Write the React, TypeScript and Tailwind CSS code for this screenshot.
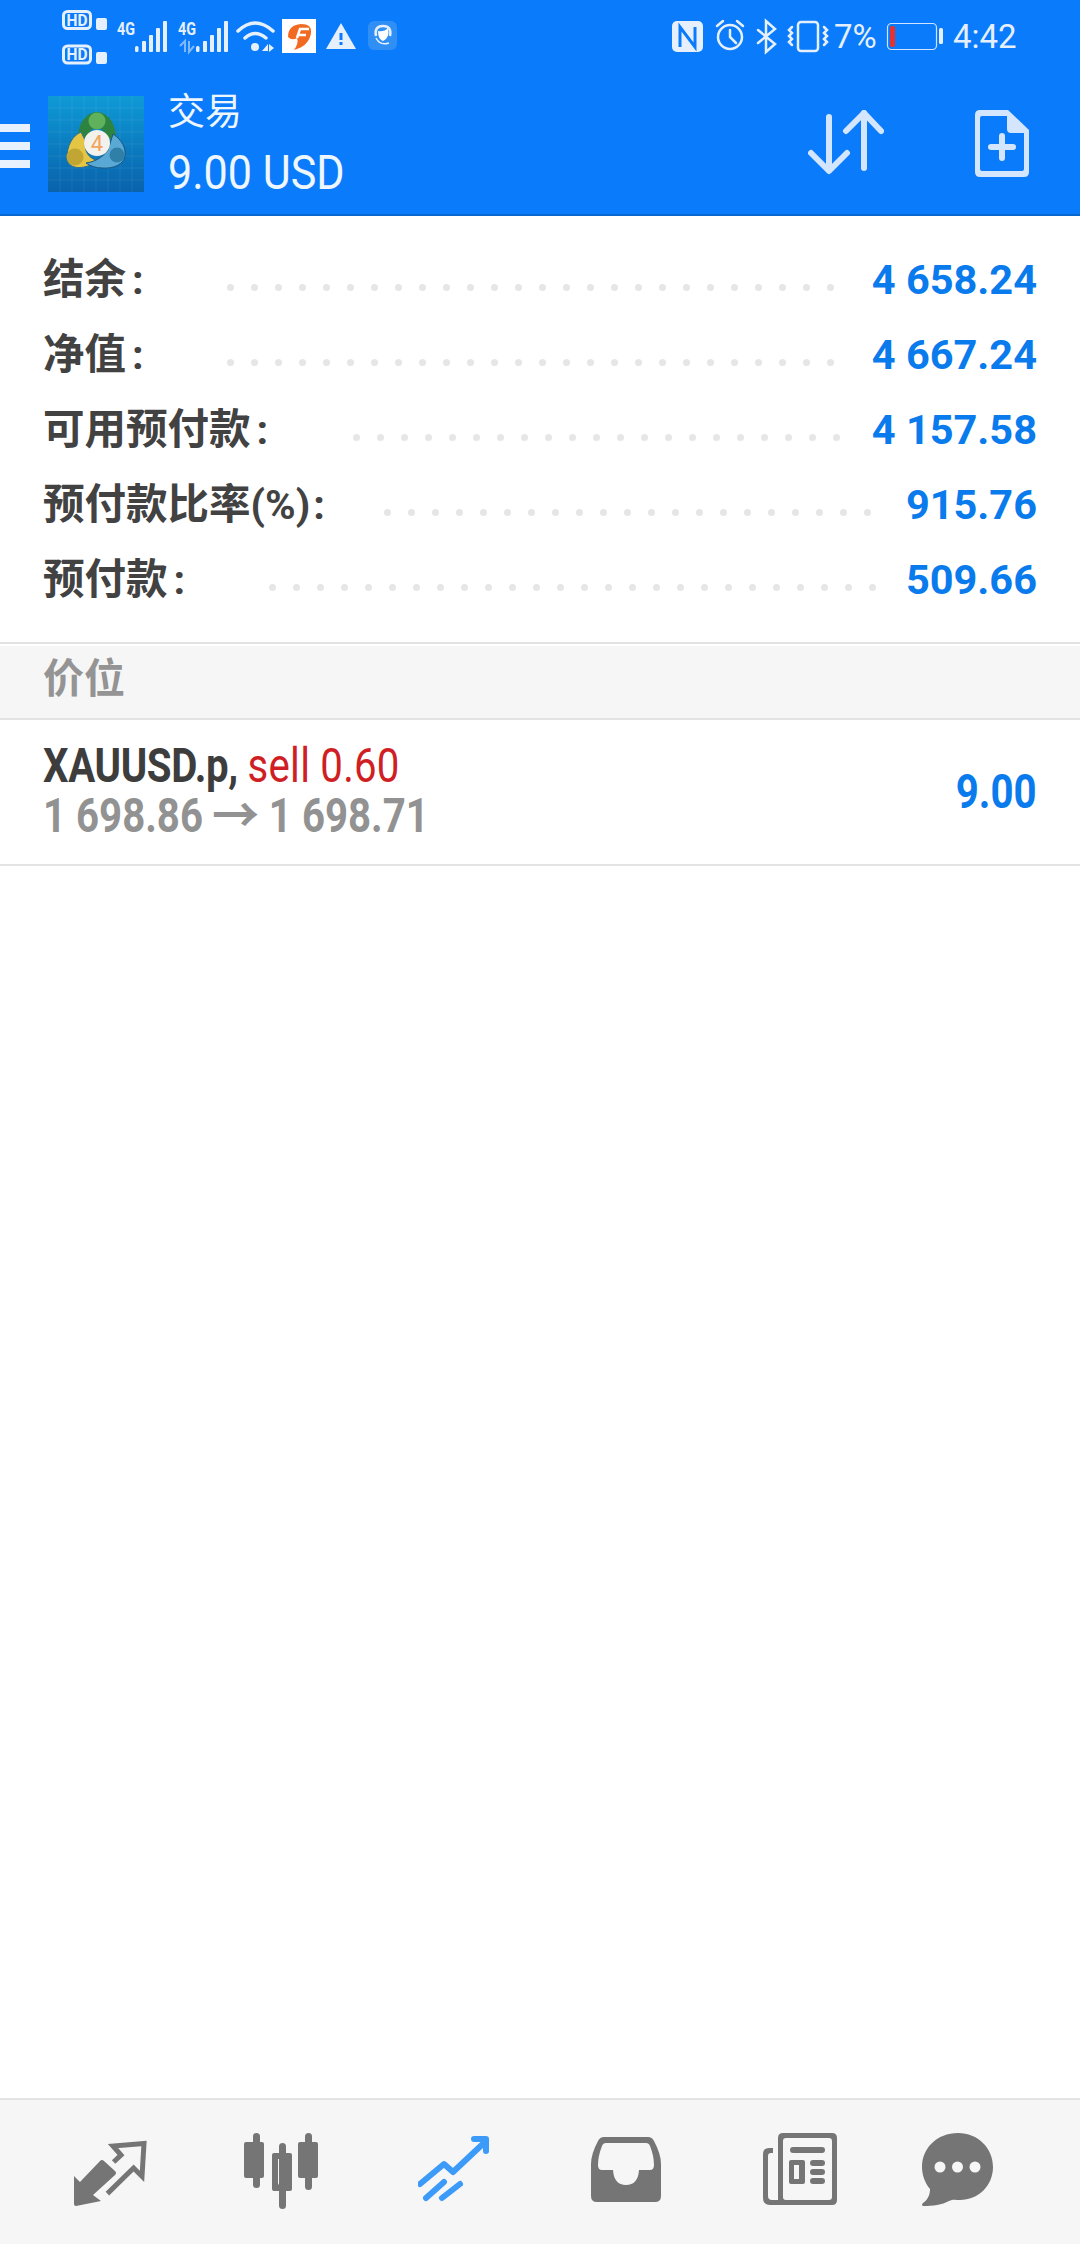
import React from "react";

const cjk = "font-['Roboto','Noto_Sans_CJK_SC',sans-serif]";
const ink = "#e6f0fd";

function Dots({ n }: { n: number }) {
  return (
    <div className="flex gap-[17px]">
      {Array.from({ length: n }).map((_, i) => (
        <span key={i} className="w-[7px] h-[7px] rounded-full bg-[#e6e6e6]" />
      ))}
    </div>
  );
}

function Row({ label, colon, value, dotsAt, n }: { label: string; colon: string; value: string; dotsAt: string; n: number }) {
  return (
    <div className="relative h-[75px] flex items-center justify-between pl-[43px] pr-[43px]">
      <span className="text-[41.5px] font-bold text-[#424242] leading-none">
        {label}
        <span className={colon}>:</span>
      </span>
      <span className="text-[41.5px] font-bold text-[#0a7bec] leading-none">{value}</span>
      <div className={`absolute top-[42px] ${dotsAt}`}>
        <Dots n={n} />
      </div>
    </div>
  );
}

function StatusLeft() {
  return (
    <svg width="400" height="70" viewBox="0 0 400 70" className="block">
      <g fill="none" stroke={ink} strokeWidth="3">
        <rect x="63.5" y="11.5" width="27" height="17" rx="4" />
        <rect x="63.5" y="46" width="27" height="17" rx="4" />
      </g>
      <g fill={ink} fontFamily="Roboto" fontWeight="700">
        <text x="66.5" y="25.5" fontSize="16" textLength="21" lengthAdjust="spacingAndGlyphs">HD</text>
        <text x="66.5" y="60" fontSize="16" textLength="21" lengthAdjust="spacingAndGlyphs">HD</text>
        <text x="117" y="35" fontSize="19" textLength="18" lengthAdjust="spacingAndGlyphs">4G</text>
        <text x="178" y="35" fontSize="19" textLength="18" lengthAdjust="spacingAndGlyphs">4G</text>
        <rect x="96" y="18" width="11" height="12" rx="2" />
        <rect x="96" y="52" width="11" height="12" rx="2" />
        <rect x="135" y="46" width="3.5" height="6" rx="1.5" />
        <rect x="142" y="41" width="4" height="11" rx="1" />
        <rect x="149" y="35" width="4" height="17" rx="1" />
        <rect x="156" y="28" width="4" height="24" rx="1" />
        <rect x="163" y="21" width="4" height="31" rx="1" />
        <rect x="196" y="46" width="3.5" height="6" rx="1.5" />
        <rect x="203" y="41" width="4" height="11" rx="1" />
        <rect x="210" y="35" width="4" height="17" rx="1" />
        <rect x="217" y="28" width="4" height="24" rx="1" />
        <rect x="224" y="21" width="4" height="31" rx="1" />
        <circle cx="255" cy="47" r="4" />
        <path d="M262 51 L268 44 V51Z M269 44 L274 48 L269 52Z" />
        <path d="M326 49 L341 23 L356 49Z" />
      </g>
      <path d="M180 46 L185 41 V52 M189 41 V52 L194 46" fill="none" stroke="#7fb8fb" strokeWidth="2" />
      <g fill="none" stroke={ink} strokeWidth="3.5" strokeLinecap="round">
        <path d="M238 31 Q255 15 273 31" />
        <path d="M245 38 Q255 29 266 38" />
      </g>
      <rect x="282" y="19" width="34" height="34" fill="#ffffff" />
      <path d="M288 37 Q288 25 301 24 Q312 24 311 33 Q309 46 294 50 Q299 43 297 38 Q292 41 288 37Z" fill="#f26a21" />
      <path d="M297 38 L300 29 H309 M298 35 H306" fill="none" stroke="#ffffff" strokeWidth="2.5" />
      <rect x="339.5" y="33" width="3" height="7" fill="#0a7bfa" />
      <rect x="339.5" y="42" width="3" height="3" fill="#0a7bfa" />
      <rect x="368" y="21" width="29" height="29" rx="6" fill="#2f8ff5" />
      <path d="M376 36 Q374 26 383 26 Q392 26 390 36" fill="none" stroke={ink} strokeWidth="2.5" />
      <path d="M378 31 Q384 32 388 28 Q390 38 383 41 Q378 39 378 31Z" fill="#ffffff" />
      <path d="M376 38 Q380 46 389 43" fill="none" stroke={ink} strokeWidth="1.5" />
    </svg>
  );
}

function StatusRight() {
  return (
    <svg width="310" height="70" viewBox="0 0 310 70" className="block">
      <rect x="32" y="21" width="31" height="31" rx="5" fill={ink} />
      <path d="M40 47 V27 L55 47 V27" fill="none" stroke="#0a7bfa" strokeWidth="3" />
      <g fill="none" stroke={ink} strokeWidth="2.5" strokeLinecap="round">
        <circle cx="90" cy="37" r="12" />
        <path d="M90 30 V37 L96 43" />
        <path d="M77 26 L83 21" />
        <path d="M103 26 L97 21" />
        <path d="M118 30 L135 44 L126 52 V21 L135 29 L118 43" />
        <rect x="158" y="22" width="20" height="29" rx="3" />
        <path d="M152 27 l-3 3 l3 3 l-3 3 l3 3 l-3 3 l3 3" />
        <path d="M184 27 l3 3 l-3 3 l3 3 l-3 3 l3 3 l-3 3" />
      </g>
      <rect x="247.5" y="23.5" width="49" height="26" rx="4" fill="none" stroke="#cfe4fe" strokeWidth="1.2" />
      <rect x="250" y="26" width="5" height="21" rx="2" fill="#e6322e" />
      <rect x="299" y="28" width="4" height="16" rx="1.5" fill={ink} />
    </svg>
  );
}

function Logo() {
  const lines = [12, 24, 36, 48, 60, 72, 84];
  return (
    <svg width="96" height="96" viewBox="0 0 96 96" className="block">
      {lines.map((p) => (
        <g key={p} stroke="#ffffff" strokeOpacity="0.07" strokeWidth="1">
          <path d={`M${p} 0 V96`} />
          <path d={`M0 ${p} H96`} />
        </g>
      ))}
      <path d="M49 16 C37 17 30 28 30 43 L40 43 C40 36 44 32 49 32 C54 32 58 36 58 43 L68 43 C68 28 61 17 49 16Z" fill="#2d8440" />
      <circle cx="49" cy="25" r="8.5" fill="#5fb15b" />
      <path d="M33 36 C24 40 19 50 19 62 C19 70 28 73 36 71 C42 70 46 67 48 64 C40 62 36 54 37 44 Z" fill="#e4c544" stroke="#2f6f8f" strokeWidth="1" />
      <circle cx="27" cy="61" r="8.5" fill="#c2a634" />
      <path d="M65 38 C74 44 78 52 77 60 C76 68 66 73 54 72 C48 72 42 70 38 67 C46 66 54 62 60 54 Z" fill="#5aa9d4" stroke="#17557f" strokeWidth="1" />
      <circle cx="69" cy="59" r="7.5" fill="#2f7fa8" />
      <circle cx="49" cy="47" r="13" fill="#f3f1ec" />
      <text x="49" y="55" textAnchor="middle" fontSize="22" fontWeight="400" fill="#f0a45c" fontFamily="Roboto">4</text>
    </svg>
  );
}

const navGray = "#757575";

function IconArrows() {
  return (
    <svg width="80" height="72" viewBox="0 0 80 72" className="block">
      <path d="M1 38 L7 44 L27 23 Q29 21 31 23 L42 33 Q44 35 42 37 L20 57 L28 63 L3 68 Q1 68 1 66Z" fill={navGray} />
      <path d="M40.6 24 L48 17 L40 8 L71 5.4 L69 38.4 L60.6 30 L34.4 55.6" fill="none" stroke={navGray} strokeWidth="5" />
    </svg>
  );
}

function IconCandles() {
  return (
    <svg width="76" height="76" viewBox="0 0 76 76" className="block">
      <g fill={navGray}>
        <rect x="10" y="0" width="7" height="55" rx="3.5" />
        <rect x="1" y="9" width="20" height="36" rx="2" />
        <rect x="36" y="10" width="7" height="66" rx="3.5" />
        <path fillRule="evenodd" d="M31 20 H47 Q49 20 49 22 V56 Q49 58 47 58 H31 Q29 58 29 56 V22 Q29 20 31 20Z M35 26 V50 Q35 52 37 52 H41 Q43 52 43 50 V28 Q43 26 41 26Z" />
        <rect x="62" y="0" width="7" height="57" rx="3.5" />
        <rect x="55" y="9" width="20" height="36" rx="2" />
      </g>
    </svg>
  );
}

function IconTrend() {
  return (
    <svg width="72" height="68" viewBox="0 0 72 68" className="block">
      <g fill="none" stroke="#3c9bf8" strokeWidth="6" strokeLinecap="round" strokeLinejoin="round">
        <path d="M2 50 L26 30 L35 38 L68 7" />
        <path d="M56 5 H68 V17" />
        <path d="M8 64 L26 48" />
        <path d="M24 64 L42 50" />
      </g>
    </svg>
  );
}

function IconInbox() {
  return (
    <svg width="72" height="68" viewBox="0 0 72 68" className="block">
      <path fillRule="evenodd" fill={navGray} d="M14 1 H58 Q62 1 64 5 Q71 18 71 28 V60 Q71 66 65 66 H7 Q1 66 1 60 V28 Q1 18 8 5 Q10 1 14 1Z M16 7 Q13 7 12 10 Q8 20 8 29 Q8 34 12 34 H23 Q24 49 36 49 Q48 49 49 34 H60 Q64 34 64 29 Q64 20 60 10 Q59 7 56 7Z" />
    </svg>
  );
}

function IconNews() {
  return (
    <svg width="76" height="74" viewBox="0 0 76 74" className="block">
      <path fillRule="evenodd" fill={navGray} d="M21 0 H70 Q75 0 75 5 V67 Q75 72 70 72 H8 Q1 72 1 65 V21 Q1 15 7 15 H11 V20 H9 Q6 20 6 23 V63 Q6 67 10 67 H16 V5 Q16 0 21 0Z M24 5 Q21 5 21 8 V64 Q21 67 24 67 H67 Q70 67 70 64 V8 Q70 5 67 5Z" />
      <g fill={navGray}>
        <rect x="28" y="14" width="35" height="6" rx="3" />
        <path fillRule="evenodd" d="M29 27 H41 Q43 27 43 29 V49 Q43 51 41 51 H29 Q27 51 27 49 V29 Q27 27 29 27Z M32 32 V46 H37 V32Z" />
        <rect x="48" y="27" width="15" height="6" rx="3" />
        <rect x="48" y="36" width="15" height="6" rx="3" />
        <rect x="48" y="45" width="15" height="6" rx="3" />
      </g>
    </svg>
  );
}

function IconChat() {
  return (
    <svg width="74" height="74" viewBox="0 0 74 74" className="block">
      <path fill={navGray} d="M37 0 C57 0 72 15 72 34 C72 53 57 67 39 67 C35 67 32 66 28 68 C21 72 12 73 2 73 Q0 72 2 70 C8 66 9 60 9 56 C4 50 1 42 1 34 C1 15 16 0 37 0Z" />
      <circle cx="19" cy="34" r="5.5" fill="#f6f6f6" />
      <circle cx="36.5" cy="34" r="5.5" fill="#f6f6f6" />
      <circle cx="54" cy="34" r="5.5" fill="#f6f6f6" />
    </svg>
  );
}

export default function App() {
  return (
    <div className={`w-[1080px] h-[2244px] bg-white flex flex-col ${cjk}`}>
      <header className="relative h-[216px] bg-[#0a7bfa] border-b-[2px] border-[#0868cf] text-white">
        <div className="absolute left-0 top-0">
          <StatusLeft />
        </div>
        <div className="absolute left-[640px] top-0">
          <StatusRight />
        </div>
        <div className="absolute left-[953px] top-[24px] text-[33px] leading-[26px] text-[#e6f0fd] font-normal">4:42</div>
        <div className="absolute left-[834px] top-[19px] text-[33px] leading-[36px] text-[#e6f0fd]">7%</div>

        <div className="absolute left-0 top-[124px] flex flex-col gap-[10px]">
          <span className="block w-[30px] h-[8px] bg-[#e8f2fe]" />
          <span className="block w-[30px] h-[8px] bg-[#e8f2fe]" />
          <span className="block w-[30px] h-[8px] bg-[#e8f2fe]" />
        </div>

        <div className="absolute left-[48px] top-[96px] w-[96px] h-[96px] bg-gradient-to-b from-[#0f9ad6] to-[#0a62ac]">
          <Logo />
        </div>

        <div className="absolute left-[168px] top-[93px] text-[37px] leading-[40px] text-[#eef6ff]">交易</div>
        <div className="absolute left-[168px] top-[147px] text-[49px] leading-[52px] text-[#eef6ff] whitespace-nowrap scale-x-[0.88] origin-left">9.00 USD</div>

        <svg width="76" height="66" viewBox="0 0 76 66" className="absolute left-[808px] top-[110px]">
          <g fill="none" stroke="#d4e6fd" strokeWidth="6" strokeLinecap="round" strokeLinejoin="round">
            <path d="M21 7 V60" />
            <path d="M3 43 L21 61 L39 43" />
            <path d="M56 58 V3" />
            <path d="M38 21 L56 3 L73 21" />
          </g>
        </svg>
        <svg width="56" height="68" viewBox="0 0 56 68" className="absolute left-[974px] top-[110px]">
          <path fillRule="evenodd" fill="#d4e6fd" d="M6 0 H34 L55 20 V62 Q55 67 50 67 H6 Q1 67 1 62 V5 Q1 0 6 0Z M8 6 Q6 6 6 8 V59 Q6 61 8 61 H48 Q50 61 50 59 V23 H37 Q33 23 33 19 V6Z" />
          <rect x="14" y="34" width="28" height="6" rx="3" fill="#d4e6fd" />
          <rect x="25" y="23" width="6" height="28" rx="3" fill="#d4e6fd" />
        </svg>
      </header>

      <section className="pt-[26px] pb-[4px] h-[426px] bg-white">
        <Row label="结余" colon="ml-[6px]" value="4 658.24" dotsAt="left-[226.5px]" n={26} />
        <Row label="净值" colon="ml-[6px]" value="4 667.24" dotsAt="left-[226.5px]" n={26} />
        <Row label="可用预付款" colon="ml-[6px]" value="4 157.58" dotsAt="left-[352.5px]" n={21} />
        <Row label="预付款比率(%)" colon="ml-[3px]" value="915.76" dotsAt="left-[383.5px]" n={21} />
        <Row label="预付款" colon="ml-[6px]" value="509.66" dotsAt="left-[268.5px]" n={26} />
      </section>

      <div className="h-[2px] bg-[#e3e3e3]" />
      <div className="h-[2px] bg-white" />
      <div className="h-[74px] bg-[#f6f6f6] border-b-[2px] border-[#e3e3e3] flex items-center pl-[43px] pb-[4px] text-[41px] font-bold text-[#949494]">价位</div>

      <div className="h-[146px] border-b-[2px] border-[#e3e3e3] flex items-center justify-between pl-[43px] pr-[43px]">
        <div className="flex flex-col pb-[3px]">
          <div className="text-[49px] leading-[50px] whitespace-nowrap scale-x-[0.82] origin-left">
            <span className="font-bold text-[#3d3d3d] tracking-[-0.4px]">XAUUSD.p, </span>
            <span className="text-[#cf1f24] tracking-[0.3px]">sell 0.60</span>
          </div>
          <div className="text-[49px] leading-[50px] whitespace-nowrap font-bold text-[#929292] scale-x-[0.82] origin-left">
            1 698.86 <span className="inline-block mx-[4px] leading-[40px] text-[48px] scale-x-[1.2] origin-center">→</span> 1 698.71
          </div>
        </div>
        <div className="text-[49px] leading-[50px] font-bold text-[#0a7bec] scale-x-[0.82] origin-right">9.00</div>
      </div>

      <div className="flex-1" />

      <nav className="h-[146px] bg-[#f6f6f6] border-t-[2px] border-[#e3e3e3] relative">
        <div className="absolute left-[73px] top-[38px]"><IconArrows /></div>
        <div className="absolute left-[243px] top-[33px]"><IconCandles /></div>
        <div className="absolute left-[418px] top-[34px]"><IconTrend /></div>
        <div className="absolute left-[590px] top-[36px]"><IconInbox /></div>
        <div className="absolute left-[762px] top-[33px]"><IconNews /></div>
        <div className="absolute left-[921px] top-[33px]"><IconChat /></div>
      </nav>
    </div>
  );
}
